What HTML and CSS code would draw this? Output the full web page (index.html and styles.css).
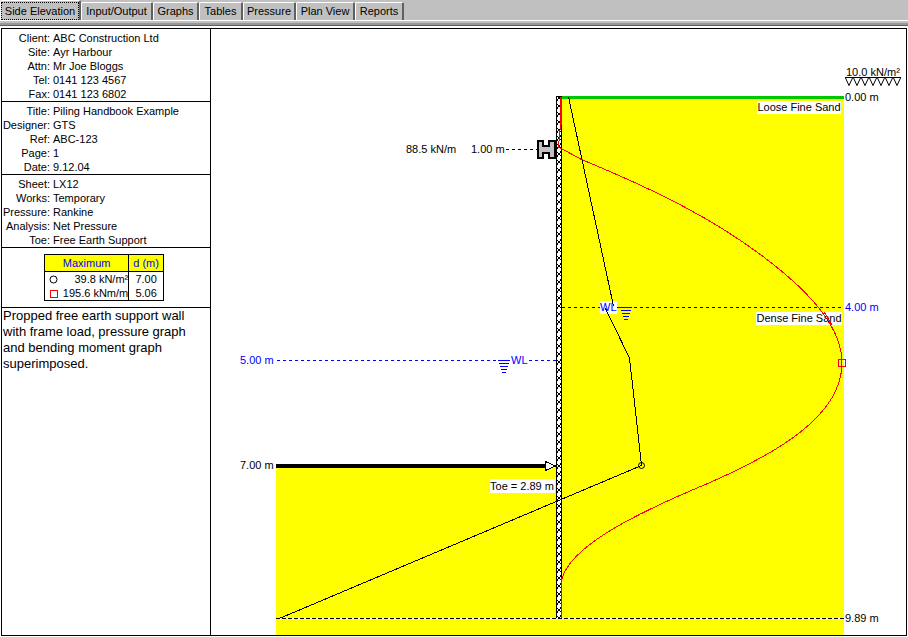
FILE: index.html
```html
<!DOCTYPE html>
<html lang="en">
<head>
<meta charset="utf-8">
<title>Side Elevation</title>
<link rel="stylesheet" href="styles.css">
</head>
<body>
<nav class="tabs" role="tablist">
  <button class="tab active" role="tab" aria-selected="true"><span class="focus">Side Elevation</span></button>
  <button class="tab" role="tab">Input/Output</button>
  <button class="tab" role="tab">Graphs</button>
  <button class="tab" role="tab">Tables</button>
  <button class="tab" role="tab">Pressure</button>
  <button class="tab" role="tab">Plan View</button>
  <button class="tab" role="tab">Reports</button>
</nav>
<div class="rule"></div>
<main class="sheet">
  <aside class="info">
    <dl class="block">
      <dt>Client:</dt><dd>ABC Construction Ltd</dd>
      <dt>Site:</dt><dd>Ayr Harbour</dd>
      <dt>Attn:</dt><dd>Mr Joe Bloggs</dd>
      <dt>Tel:</dt><dd>0141 123 4567</dd>
      <dt>Fax:</dt><dd>0141 123 6802</dd>
    </dl>
    <dl class="block">
      <dt>Title:</dt><dd>Piling Handbook Example</dd>
      <dt>Designer:</dt><dd>GTS</dd>
      <dt>Ref:</dt><dd>ABC-123</dd>
      <dt>Page:</dt><dd>1</dd>
      <dt>Date:</dt><dd>9.12.04</dd>
    </dl>
    <dl class="block">
      <dt>Sheet:</dt><dd>LX12</dd>
      <dt>Works:</dt><dd>Temporary</dd>
      <dt>Pressure:</dt><dd>Rankine</dd>
      <dt>Analysis:</dt><dd>Net Pressure</dd>
      <dt>Toe:</dt><dd>Free Earth Support</dd>
    </dl>
    <div class="maxima">
      <table class="max-table">
        <thead><tr><th colspan="2" class="max-head">Maximum</th><th class="depth">d (m)</th></tr></thead>
        <tbody>
          <tr><td class="mark"><svg class="symbol" viewBox="0 0 9 9"><circle cx="4.5" cy="4.5" r="3.5" fill="none" stroke="#000"/></svg></td><td class="value">39.8 kN/m²</td><td class="depth">7.00</td></tr>
          <tr><td class="mark"><svg class="symbol" viewBox="0 0 9 9" shape-rendering="crispEdges"><rect x="1.5" y="1.5" width="7" height="7" fill="none" stroke="#f00"/></svg></td><td class="value">195.6 kNm/m</td><td class="depth">5.06</td></tr>
        </tbody>
      </table>
    </div>
    <p class="note">Propped free earth support wall with frame load, pressure graph and bending moment graph superimposed.</p>
  </aside>
  <section class="drawing">
    <svg class="elevation" viewBox="211 29 695 606" role="img" aria-label="Side elevation of propped wall">
      <defs>
        <pattern id="lattice" x="557" y="96" width="4" height="8" patternUnits="userSpaceOnUse">
          <rect width="4" height="8" fill="#fff"/>
          <path d="M0 0h1v1H0zM3 0h1v1H3zM1 1h2v2H1zM0 3h1v1H0zM3 3h1v1H3zM0 4h1v1H0zM3 7h1v1H3z" fill="#000"/>
        </pattern>
      </defs>
      <g shape-rendering="crispEdges">
        <rect x="562" y="96" width="282" height="539" fill="#ff0"/>
        <path d="M276 467h286v168H276z" fill="#ff0"/>
        <rect x="562" y="96" width="282" height="3" fill="#00c800"/>
        <path d="M276 618.5H844" stroke="#fff"/>
        <path d="M276 618.5H844" stroke="#000" stroke-dasharray="4 2"/>
        <path d="M562 307.5H844" stroke="#000080" stroke-dasharray="3 3"/>
        <path d="M277 360.5H556" stroke="#00f" stroke-dasharray="3 3"/>
        <path d="M506 149.5H537" stroke="#000" stroke-dasharray="3 3"/>
        <rect x="557" y="96" width="4" height="522" fill="url(#lattice)"/>
        <path d="M556.5 96v522M561.5 96v522M556 96.5h6" stroke="#000" fill="none"/>
        <rect x="276" y="464" width="270" height="4"/>
        <path d="M545.5 461.5v9l10-4.500z" fill="#fff" stroke="#000"/>
        <path d="M538 141h5v5h6v-5h6v17h-6v-5h-6v5h-5z" fill="#c0c0c0" stroke="#000" stroke-width="2"/>
        <rect x="757" y="101" width="84" height="13" fill="#fff"/>
        <rect x="756" y="312" width="86" height="13" fill="#fff"/>
        <rect x="490" y="479" width="65" height="14" fill="#fff"/>
        <rect x="600" y="301" width="17" height="13" fill="#fff"/>
        <rect x="510" y="354" width="18" height="12" fill="#fff"/>
        <path d="M498 360.500h12M499 363.500h10M500 366.500h8M501 369.500h6M502 372.500h4M618 307.500h14M621 310.500h10M622 313.500h8M623 316.500h6M624 319.500h4" stroke="#00f"/>
        <path d="M568.500 97L613.500 306M605.500 308.500L629.500 358L641.500 465.500L280.500 618" fill="none" stroke="#000"/>
        <rect x="560" y="97" width="2" height="28" fill="#f00"/>
        <path d="M560.500 125L558.500 147L581.500 159.500C660 192 715 220 765 258C815 296 842 330 842 363C842 415 780 454 690 491C630 517 570 547 561.500 580V618" fill="none" stroke="#f00"/>
        <rect x="838.500" y="359.500" width="7" height="7" fill="none" stroke="#f00"/>
        <path d="M845 77.500h56" stroke="#000"/>
      </g>
      <path d="M845.500 78l3.500 7.500l3.500-7.500M853.500 78l3.500 7.500l3.500-7.500M861.500 78l3.500 7.500l3.500-7.500M869.500 78l3.500 7.500l3.500-7.500M877.500 78l3.500 7.500l3.500-7.500M885.500 78l3.500 7.500l3.500-7.500M893.500 78l3.500 7.500l3.500-7.500" fill="none" stroke="#000"/>
      <circle cx="641.500" cy="465.500" r="3" fill="none" stroke="#000"/>
      <g class="labels">
        <text x="846" y="76">10.0 kN/m²</text>
        <text x="845" y="101">0.00 m</text>
        <text x="799" y="111" class="centered">Loose Fine Sand</text>
        <text x="799" y="322" class="centered">Dense Fine Sand</text>
        <text x="406" y="153">88.5 kN/m</text>
        <text x="471" y="153">1.00 m</text>
        <text x="240" y="469">7.00 m</text>
        <text x="522" y="490" class="centered">Toe = 2.89 m</text>
        <text x="845" y="622">9.89 m</text>
        <g class="water">
          <text x="845" y="311">4.00 m</text>
          <text x="240" y="364">5.00 m</text>
          <text x="511" y="364">WL</text>
          <text x="600" y="311">WL</text>
        </g>
      </g>
      <path d="M824 312L832 325" stroke="#f00" shape-rendering="crispEdges"/>
    </svg>
  </section>
</main>
</body>
</html>
```
FILE: styles.css
```css
* { box-sizing: border-box; }
body {
  margin: 0;
  background: #fff;
  color: #000;
  font: 11px/14px "Liberation Sans", Arial, sans-serif;
}
.tabs {
  display: grid;
  grid-template-columns: 81px 72px 46px 44px 53px 59px 49px;
  align-items: end;
  height: 20px;
  background: #c0c0c0;
}
.tab {
  height: 18px;
  padding: 0;
  border: 0;
  border-top: 1px solid #fff;
  border-left: 1px solid #fff;
  border-right: 2px solid #606060;
  border-radius: 2px 2px 0 0;
  background: #c0c0c0;
  color: #000;
  font: 11px/17px "Liberation Sans", Arial, sans-serif;
  white-space: nowrap;
}
.tab.active {
  height: 20px;
  line-height: 16px;
}
.focus {
  display: block;
  height: 18px;
  border: 1px dotted #000;
}
.rule {
  height: 6px;
  border-top: 1px solid #fff;
  border-bottom: 1px solid #606060;
  background: linear-gradient(#c0c0c0 50%, #989898 50%);
}
.sheet {
  display: flex;
  margin: 2px 1px 1px;
  border: 1px solid #000;
}
.info {
  flex: 0 0 209px;
  border-right: 1px solid #000;
}
.block {
  display: grid;
  grid-template-columns: 48px 1fr;
  column-gap: 3px;
  margin: 0;
  padding-top: 2px;
  border-bottom: 1px solid #000;
}
.block dt {
  display: flex;
  justify-content: flex-end;
  white-space: nowrap;
}
.block dd { margin: 0; }
.maxima {
  padding: 6px 0 6px 42px;
  border-bottom: 1px solid #000;
}
.max-table {
  width: 120px;
  border: 1px solid #000;
  border-spacing: 0;
}
.max-table th {
  height: 17px;
  padding: 0;
  border-bottom: 1px solid #000;
  background: #ff0;
  color: #00f;
  font-weight: normal;
}
.max-table td { padding: 0; white-space: nowrap; }
.max-table .depth {
  width: 35px;
  border-left: 1px solid #000;
  text-align: center;
}
.max-table .mark { width: 18px; text-align: center; }
.max-table .value { text-align: right; }
.symbol { display: block; width: 9px; height: 9px; margin: 0 auto; }
.note {
  margin: 0;
  padding: 0 16px 0 1px;
  font-size: 13px;
  line-height: 16px;
}
.drawing { flex: 1; min-width: 0; }
.elevation { display: block; width: 100%; height: auto; }
.labels { font: 11px "Liberation Sans", Arial, sans-serif; }
.centered { text-anchor: middle; }
.water { fill: #00f; }
```
